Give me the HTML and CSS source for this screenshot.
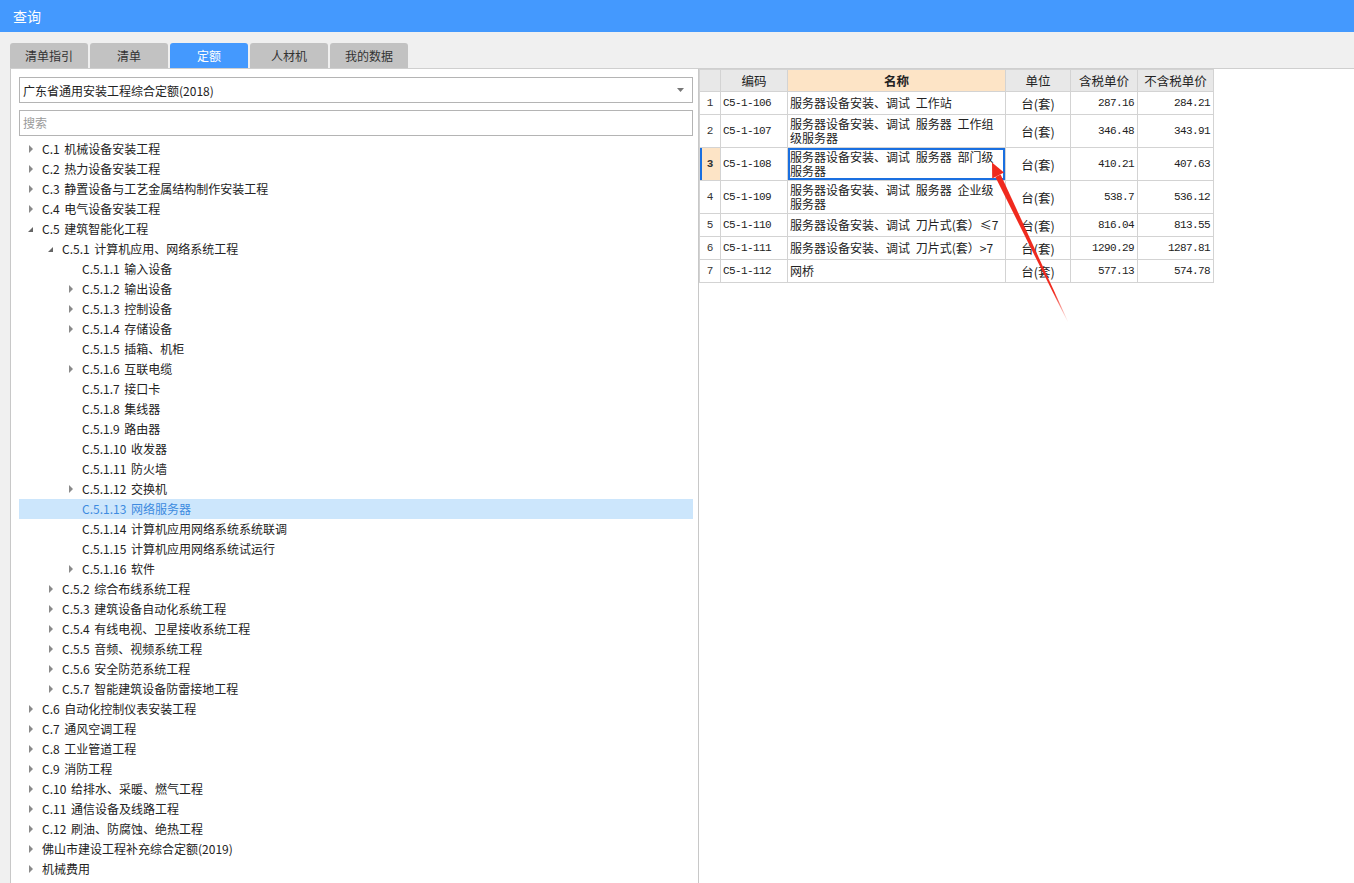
FILE: index.html
```html
<!DOCTYPE html>
<html lang="zh-CN">
<head>
<meta charset="utf-8">
<title>查询</title>
<link rel="stylesheet" href="styles.css">
</head>
<body>
<div class="titlebar">查询</div>
<div class="main">
  <div class="tabs">
    <div class="tab">清单指引</div>
    <div class="tab">清单</div>
    <div class="tab active">定额</div>
    <div class="tab">人材机</div>
    <div class="tab">我的数据</div>
  </div>
  <div class="content">
    <div class="left">
      <div class="select">
        <span>广东省通用安装工程综合定额(2018)</span>
        <svg class="caret" width="7" height="4" viewBox="0 0 7 4"><path d="M0 0H7L3.5 4Z" fill="#777"/></svg>
      </div>
      <div class="search">搜索</div>
      <ul class="tree">
        <li class="node l0"><i class="tw c"></i>C.1 机械设备安装工程</li>
        <li class="node l0"><i class="tw c"></i>C.2 热力设备安装工程</li>
        <li class="node l0"><i class="tw c"></i>C.3 静置设备与工艺金属结构制作安装工程</li>
        <li class="node l0"><i class="tw c"></i>C.4 电气设备安装工程</li>
        <li class="node l0"><i class="tw e"></i>C.5 建筑智能化工程</li>
        <li class="node l1"><i class="tw e"></i>C.5.1 计算机应用、网络系统工程</li>
        <li class="node l2"><i class="tw"></i>C.5.1.1 输入设备</li>
        <li class="node l2"><i class="tw c"></i>C.5.1.2 输出设备</li>
        <li class="node l2"><i class="tw c"></i>C.5.1.3 控制设备</li>
        <li class="node l2"><i class="tw c"></i>C.5.1.4 存储设备</li>
        <li class="node l2"><i class="tw"></i>C.5.1.5 插箱、机柜</li>
        <li class="node l2"><i class="tw c"></i>C.5.1.6 互联电缆</li>
        <li class="node l2"><i class="tw"></i>C.5.1.7 接口卡</li>
        <li class="node l2"><i class="tw"></i>C.5.1.8 集线器</li>
        <li class="node l2"><i class="tw"></i>C.5.1.9 路由器</li>
        <li class="node l2"><i class="tw"></i>C.5.1.10 收发器</li>
        <li class="node l2"><i class="tw"></i>C.5.1.11 防火墙</li>
        <li class="node l2"><i class="tw c"></i>C.5.1.12 交换机</li>
        <li class="node l2 sel"><i class="tw"></i>C.5.1.13 网络服务器</li>
        <li class="node l2"><i class="tw"></i>C.5.1.14 计算机应用网络系统系统联调</li>
        <li class="node l2"><i class="tw"></i>C.5.1.15 计算机应用网络系统试运行</li>
        <li class="node l2"><i class="tw c"></i>C.5.1.16 软件</li>
        <li class="node l1"><i class="tw c"></i>C.5.2 综合布线系统工程</li>
        <li class="node l1"><i class="tw c"></i>C.5.3 建筑设备自动化系统工程</li>
        <li class="node l1"><i class="tw c"></i>C.5.4 有线电视、卫星接收系统工程</li>
        <li class="node l1"><i class="tw c"></i>C.5.5 音频、视频系统工程</li>
        <li class="node l1"><i class="tw c"></i>C.5.6 安全防范系统工程</li>
        <li class="node l1"><i class="tw c"></i>C.5.7 智能建筑设备防雷接地工程</li>
        <li class="node l0"><i class="tw c"></i>C.6 自动化控制仪表安装工程</li>
        <li class="node l0"><i class="tw c"></i>C.7 通风空调工程</li>
        <li class="node l0"><i class="tw c"></i>C.8 工业管道工程</li>
        <li class="node l0"><i class="tw c"></i>C.9 消防工程</li>
        <li class="node l0"><i class="tw c"></i>C.10 给排水、采暖、燃气工程</li>
        <li class="node l0"><i class="tw c"></i>C.11 通信设备及线路工程</li>
        <li class="node l0"><i class="tw c"></i>C.12 刷油、防腐蚀、绝热工程</li>
        <li class="node l0"><i class="tw c"></i>佛山市建设工程补充综合定额(2019)</li>
        <li class="node l0"><i class="tw c"></i>机械费用</li>
      </ul>
    </div>
    <div class="right">
      <table class="grid">
        <colgroup>
          <col class="c-no"><col class="c-code"><col class="c-name"><col class="c-unit"><col class="c-p1"><col class="c-p2">
        </colgroup>
        <thead>
          <tr><th></th><th>编码</th><th class="hl">名称</th><th>单位</th><th>含税单价</th><th>不含税单价</th></tr>
        </thead>
        <tbody>
          <tr class="h23"><td class="no">1</td><td class="mono">C5-1-106</td><td class="name">服务器设备安装、调试 工作站</td><td class="unit">台(套)</td><td class="num">287.16</td><td class="num">284.21</td></tr>
          <tr class="h33"><td class="no">2</td><td class="mono">C5-1-107</td><td class="name">服务器设备安装、调试 服务器 工作组<br>级服务器</td><td class="unit">台(套)</td><td class="num">346.48</td><td class="num">343.91</td></tr>
          <tr class="h33 cur"><td class="no">3</td><td class="mono">C5-1-108</td><td class="name focus">服务器设备安装、调试 服务器 部门级<br>服务器</td><td class="unit">台(套)</td><td class="num">410.21</td><td class="num">407.63</td></tr>
          <tr class="h33"><td class="no">4</td><td class="mono">C5-1-109</td><td class="name">服务器设备安装、调试 服务器 企业级<br>服务器</td><td class="unit">台(套)</td><td class="num">538.7</td><td class="num">536.12</td></tr>
          <tr class="h23"><td class="no">5</td><td class="mono">C5-1-110</td><td class="name">服务器设备安装、调试 刀片式(套）≤7</td><td class="unit">台(套)</td><td class="num">816.04</td><td class="num">813.55</td></tr>
          <tr class="h23"><td class="no">6</td><td class="mono">C5-1-111</td><td class="name">服务器设备安装、调试 刀片式(套）&gt;7</td><td class="unit">台(套)</td><td class="num">1290.29</td><td class="num">1287.81</td></tr>
          <tr class="h23"><td class="no">7</td><td class="mono">C5-1-112</td><td class="name">网桥</td><td class="unit">台(套)</td><td class="num">577.13</td><td class="num">574.78</td></tr>
        </tbody>
      </table>
    </div>
  </div>
</div>
<svg class="annot" width="1354" height="883" viewBox="0 0 1354 883">
  <defs>
    <linearGradient id="fade" gradientUnits="userSpaceOnUse" x1="998" y1="175" x2="1068" y2="322">
      <stop offset="0" stop-color="#f02a1e"/>
      <stop offset="0.8" stop-color="#f02a1e"/>
      <stop offset="1" stop-color="#f02a1e" stop-opacity="0"/>
    </linearGradient>
  </defs>
  <path d="M1000.6 174.4 L995.4 176.9 L1067.8 322.2 L1068.3 321.9 Z" fill="url(#fade)"/>
  <path d="M992 162.5 L1004 172.6 L992.2 178.4 Z" fill="#f02a1e"/>
</svg>
</body>
</html>
```
FILE: styles.css
```css
* { box-sizing: border-box; }
html, body { margin: 0; padding: 0; }
body {
  width: 1354px;
  height: 883px;
  overflow: hidden;
  background: #f0f0f0;
  font-family: "Noto Sans CJK SC", "Noto Sans", sans-serif;
  font-size: 12px;
  color: #222;
  position: relative;
}
.titlebar {
  height: 32px;
  background: #4499fe;
  color: #fff;
  font-size: 14px;
  line-height: 32px;
  padding-left: 13px;
}
.main {
  padding: 11px 0 0 10px;
}
.tabs {
  display: flex;
  gap: 2px;
  height: 25px;
}
.tab {
  width: 78px;
  height: 25px;
  background: #c2c2c2;
  border-radius: 3px 3px 0 0;
  text-align: center;
  line-height: 25px;
  font-size: 12px;
  color: #333;
}
.tab.active {
  background: #4499fe;
  color: #fff;
}
.content {
  display: flex;
  height: 815px;
  border-top: 1px solid #cfcfcf;
}
.left {
  width: 689px;
  background: #fff;
  border-left: 1px solid #c8c8c8;
  border-right: 1px solid #c8c8c8;
  padding: 8px 5px 0 8px;
}
.select {
  height: 26px;
  border: 1px solid #b4b4b4;
  display: flex;
  align-items: center;
  justify-content: space-between;
  padding: 0 8px 0 3px;
  color: #222;
}
.search {
  margin-top: 7px;
  height: 26px;
  border: 1px solid #b4b4b4;
  line-height: 24px;
  padding-left: 3px;
  color: #9a9a9a;
}
.tree {
  list-style: none;
  margin: 3px 0 0;
  padding: 0;
}
.node {
  height: 20px;
  line-height: 20px;
  display: flex;
  align-items: center;
  white-space: pre;
  word-spacing: 2px;
  color: #222;
}
.node.l0 { padding-left: 7px; }
.node.l1 { padding-left: 27px; }
.node.l2 { padding-left: 47px; }
.node.sel {
  background: #cce6fc;
  color: #3d8be0;
}
.tw {
  display: inline-block;
  width: 16px;
  height: 20px;
  flex: none;
  position: relative;
}
.tw.c::before {
  content: "";
  position: absolute;
  left: 3px;
  top: 6px;
  border-left: 4px solid #8a8a8a;
  border-top: 4px solid transparent;
  border-bottom: 4px solid transparent;
}
.tw.e::before {
  content: "";
  position: absolute;
  left: 2px;
  top: 8px;
  border-right: 5px solid #666;
  border-top: 5px solid transparent;
}
.right {
  flex: 1;
  background: #fff;
}
.grid {
  border-collapse: collapse;
  table-layout: fixed;
  width: 514px;
}
.c-no { width: 21px; }
.c-code { width: 67px; }
.c-name { width: 218px; }
.c-unit { width: 65px; }
.c-p1 { width: 67px; }
.c-p2 { width: 76px; }
.grid th, .grid td {
  border: 1px solid #d3d3d3;
  padding: 0 2px;
  overflow: hidden;
  white-space: nowrap;
}
.grid th {
  height: 22px;
  background: #e8e8e8;
  font-weight: normal;
  font-size: 12.5px;
  color: #222;
  text-align: center;
}
.grid th.hl {
  background: #fde4c6;
  font-weight: bold;
}
.h23 td { height: 23px; }
.h33 td { height: 33px; }
.grid td.no {
  text-align: center;
  font-family: "Liberation Mono", "DejaVu Sans Mono", monospace;
  font-size: 11px;
  color: #333;
  padding: 0;
}
.grid td.mono {
  font-family: "Liberation Mono", "DejaVu Sans Mono", monospace;
  font-size: 11px;
  letter-spacing: -0.6px;
  color: #222;
}
.grid td.num {
  text-align: right;
  font-family: "Liberation Mono", "DejaVu Sans Mono", monospace;
  font-size: 11px;
  letter-spacing: -0.6px;
  color: #222;
  padding-right: 3px;
}
.grid td.name {
  line-height: 14px;
  font-size: 12px;
  word-spacing: 3px;
}
.grid td.unit {
  text-align: center;
  font-size: 12.5px;
}
.cur td.no {
  background: #fde4c6;
  font-weight: bold;
  box-shadow: inset 2px 0 0 #1a6fe0;
}
.grid td.focus {
  box-shadow: inset 0 0 0 2px #1a6fe0;
}
.annot {
  position: absolute;
  left: 0;
  top: 0;
  pointer-events: none;
}
```
